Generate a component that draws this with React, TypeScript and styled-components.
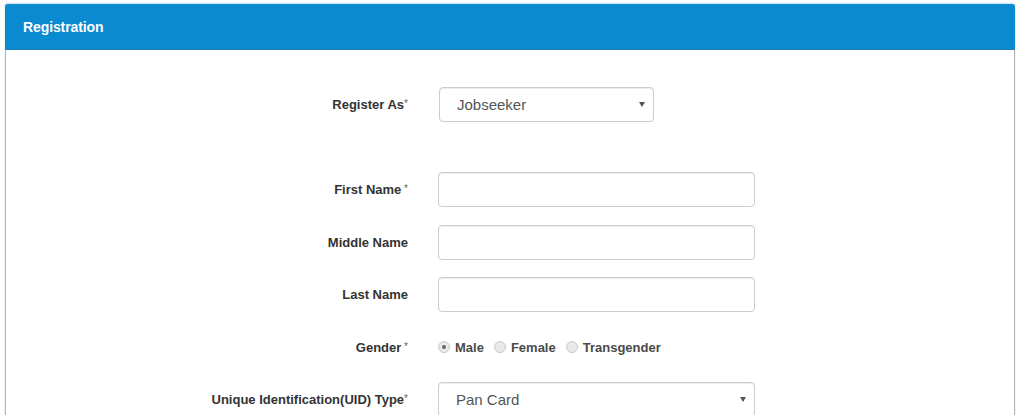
import React, { FC } from "react";
import styled, { createGlobalStyle } from "styled-components";

const GlobalStyle = createGlobalStyle`
  html, body {
    margin: 0;
    padding: 0;
    background: #ffffff;
    font-family: "Liberation Sans", Arial, sans-serif;
  }
`;

type Field = {
  label: string;
  required?: string;
  kind: "text" | "select";
  value?: string;
  narrow?: boolean;
};

const topField: Field = { label: "Register As", required: "*", kind: "select", value: "Jobseeker", narrow: true };

const nameFields: Field[] = [
  { label: "First Name", required: " *", kind: "text" },
  { label: "Middle Name", kind: "text" },
  { label: "Last Name", kind: "text" },
];

const uidField: Field = { label: "Unique Identification(UID) Type", required: "*", kind: "select", value: "Pan Card" };

const genders = ["Male", "Female", "Transgender"];

const FieldLabel: FC<{ text: string; required?: string }> = ({ text, required }) => (
  <Label>
    {text}
    {required && <Req>{required}</Req>}
  </Label>
);

const FieldControl: FC<{ field: Field }> = ({ field }) => {
  if (field.kind === "select") {
    return (
      <SelectWrap $narrow={field.narrow}>
        <Select defaultValue={field.value}>
          <option>{field.value}</option>
        </Select>
        <Caret />
      </SelectWrap>
    );
  }
  return <TextInput type="text" />;
};

export default function App() {
  return (
    <>
      <GlobalStyle />
      <Viewport>
        <Panel>
          <PanelHeader>Registration</PanelHeader>
          <PanelBody>
            <Row $extraGap>
              <FieldLabel text={topField.label} required={topField.required} />
              <FieldControl field={topField} />
            </Row>
            {nameFields.map((f) => (
              <Row key={f.label}>
                <FieldLabel text={f.label} required={f.required} />
                <FieldControl field={f} />
              </Row>
            ))}
            <Row>
              <FieldLabel text="Gender" required=" *" />
              <RadioGroup>
                {genders.map((g, i) => (
                  <RadioOption key={g}>
                    <Radio type="radio" name="gender" defaultChecked={i === 0} />
                    {g}
                  </RadioOption>
                ))}
              </RadioGroup>
            </Row>
            <Row>
              <FieldLabel text={uidField.label} required={uidField.required} />
              <FieldControl field={uidField} />
            </Row>
          </PanelBody>
        </Panel>
      </Viewport>
    </>
  );
}

const Viewport = styled.div`
  height: 415px;
  overflow: hidden;
`;

const Panel = styled.div`
  margin: 4px 0 0 5px;
  width: 1008px;
  border: 1px solid #b5b5b5;
  border-top: none;
  border-radius: 3px 3px 0 0;
  box-shadow: 0 -1px 2px rgba(120, 190, 230, 0.5);
  background: #ffffff;
`;

const PanelHeader = styled.div`
  height: 45px;
  margin: 0 -1px;
  display: flex;
  align-items: center;
  padding-left: 18px;
  background: #0a8ad0;
  border-bottom: 1px solid #1a7db5;
  border-radius: 3px 3px 0 0;
  color: #ffffff;
  font-size: 14px;
  font-weight: bold;
  letter-spacing: -0.1px;
`;

const PanelBody = styled.div`
  padding-top: 37px;
  display: flex;
  flex-direction: column;
  gap: 17.5px;
  min-height: 400px;
`;

const Row = styled.div<{ $extraGap?: boolean }>`
  display: grid;
  grid-template-columns: 402px 317px;
  column-gap: 30px;
  align-items: center;
  height: 35px;
  margin-bottom: ${(p) => (p.$extraGap ? "32.5px" : "0")};
`;

const Label = styled.label`
  text-align: right;
  font-size: 13px;
  font-weight: bold;
  color: #333333;
`;

const Req = styled.span`
  font-size: 10px;
  font-weight: normal;
  color: #666666;
  vertical-align: 2px;
  white-space: pre;
`;

const TextInput = styled.input`
  box-sizing: border-box;
  width: 317px;
  height: 35px;
  border: 1px solid #cccccc;
  border-radius: 4px;
  box-shadow: inset 0 1px 1px rgba(0, 0, 0, 0.075);
  padding: 6px 17px;
  font-family: "Liberation Sans", Arial, sans-serif;
  font-size: 15px;
  color: #555555;
  background: #ffffff;
  outline: none;
`;

const SelectWrap = styled.div<{ $narrow?: boolean }>`
  position: relative;
  width: ${(p) => (p.$narrow ? "215px" : "317px")};
  margin-left: ${(p) => (p.$narrow ? "1px" : "0")};
  height: 35px;
`;

const Select = styled.select`
  appearance: none;
  box-sizing: border-box;
  width: 100%;
  height: 35px;
  border: 1px solid #cccccc;
  border-radius: 4px;
  box-shadow: inset 0 1px 1px rgba(0, 0, 0, 0.075);
  padding: 0 17px;
  font-family: "Liberation Sans", Arial, sans-serif;
  font-size: 15px;
  color: #555555;
  background: #ffffff;
  outline: none;
`;

const Caret = styled.span`
  position: absolute;
  right: 9px;
  top: 15px;
  width: 0;
  height: 0;
  border-left: 3px solid transparent;
  border-right: 3px solid transparent;
  border-top: 5px solid #555555;
  pointer-events: none;
`;

const RadioGroup = styled.div`
  display: flex;
  align-items: center;
  gap: 10px;
`;

const RadioOption = styled.label`
  display: flex;
  align-items: center;
  gap: 5px;
  font-size: 13px;
  font-weight: bold;
  color: #4a4a4a;
`;

const Radio = styled.input`
  appearance: none;
  margin: 0;
  width: 12px;
  height: 12px;
  border-radius: 50%;
  border: 1px solid #c9c9c9;
  background: #e9e9e9;
  display: grid;
  place-content: center;
  &:checked::before {
    content: "";
    width: 4px;
    height: 4px;
    border-radius: 50%;
    background: #666666;
  }
`;
